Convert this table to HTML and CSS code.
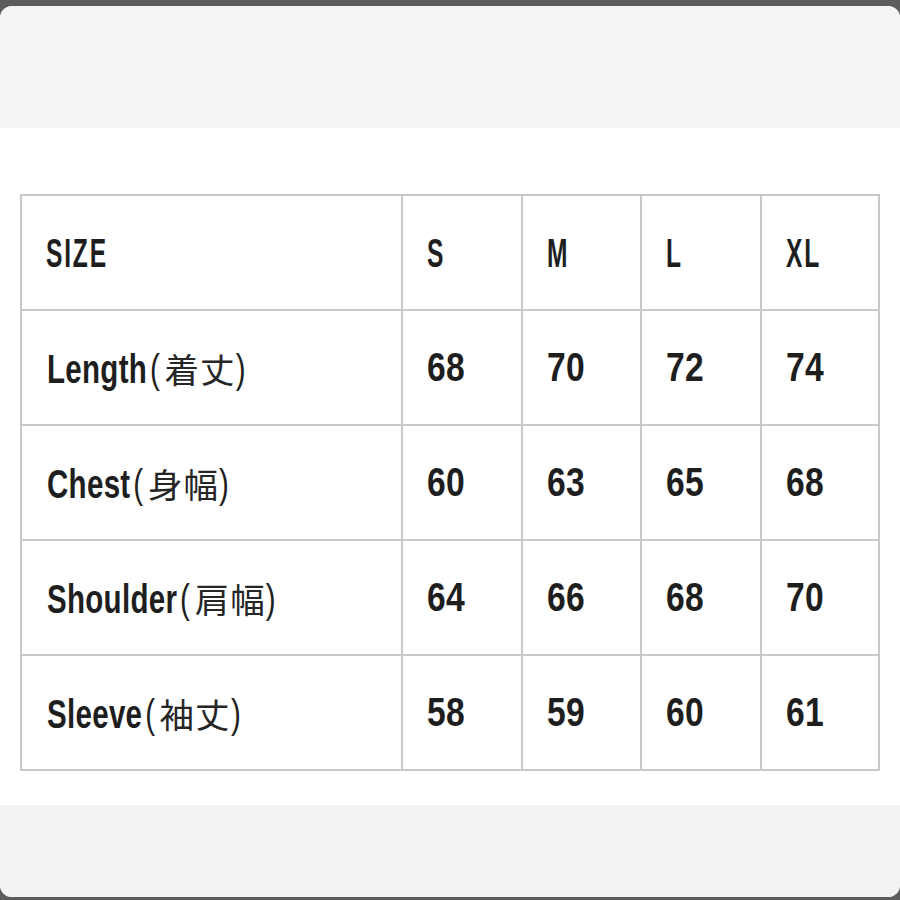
FILE: index.html
```html
<!DOCTYPE html>
<html lang="ja">
<head>
<meta charset="utf-8">
<title>Size chart</title>
<link rel="stylesheet" href="styles.css">
</head>
<body>
<div class="frame">
  <div class="band-top"></div>
  <div class="sheet">
    <div class="chart">
      <div class="cell"><span class="t caps">SIZE</span></div>
      <div class="cell"><span class="t caps">S</span></div>
      <div class="cell"><span class="t caps">M</span></div>
      <div class="cell"><span class="t caps">L</span></div>
      <div class="cell"><span class="t caps">XL</span></div>

      <div class="cell"><span class="t label">Length<span class="p">(</span><span class="cjk">着丈</span><span class="p">)</span></span></div>
      <div class="cell"><span class="t num">68</span></div>
      <div class="cell"><span class="t num">70</span></div>
      <div class="cell"><span class="t num">72</span></div>
      <div class="cell"><span class="t num">74</span></div>

      <div class="cell"><span class="t label">Chest<span class="p">(</span><span class="cjk">身幅</span><span class="p">)</span></span></div>
      <div class="cell"><span class="t num">60</span></div>
      <div class="cell"><span class="t num">63</span></div>
      <div class="cell"><span class="t num">65</span></div>
      <div class="cell"><span class="t num">68</span></div>

      <div class="cell"><span class="t label">Shoulder<span class="p">(</span><span class="cjk">肩幅</span><span class="p">)</span></span></div>
      <div class="cell"><span class="t num">64</span></div>
      <div class="cell"><span class="t num">66</span></div>
      <div class="cell"><span class="t num">68</span></div>
      <div class="cell"><span class="t num">70</span></div>

      <div class="cell"><span class="t label">Sleeve<span class="p">(</span><span class="cjk">袖丈</span><span class="p">)</span></span></div>
      <div class="cell"><span class="t num">58</span></div>
      <div class="cell"><span class="t num">59</span></div>
      <div class="cell"><span class="t num">60</span></div>
      <div class="cell"><span class="t num">61</span></div>
    </div>
  </div>
  <div class="band-bottom"></div>
</div>
</body>
</html>
```
FILE: styles.css
```css
html, body {
  margin: 0;
  padding: 0;
  background: #5c5c5c;
}
body {
  width: 900px;
  height: 900px;
  overflow: hidden;
  padding-top: 6px;
  box-sizing: border-box;
}
.frame {
  height: 891px;
  border-radius: 12px;
  background: #f4f4f4;
  overflow: hidden;
  display: flex;
  flex-direction: column;
}
.band-top {
  height: 122px;
  background: #f4f4f4;
}
.sheet {
  height: 677px;
  background: #ffffff;
  padding: 66px 20px 0 20px;
  box-sizing: border-box;
}
.band-bottom {
  flex: 1;
  background: #f3f3f3;
}
.chart {
  display: grid;
  grid-template-columns: 379px 118px 117px 118px 116px;
  grid-auto-rows: 113px;
  gap: 2px;
  padding: 2px;
  background: #c9c9c9;
  width: 860px;
  box-sizing: border-box;
}
.cell {
  background: #ffffff;
  display: flex;
  align-items: center;
  padding-left: 24px;
  overflow: hidden;
  font-family: "Liberation Sans", Arial, sans-serif;
  font-weight: 700;
  font-size: 41px;
  color: #1e1e1e;
  white-space: nowrap;
}
.t {
  display: inline-block;
  transform-origin: left center;
}
.caps {
  transform: scaleX(0.6);
  letter-spacing: 3px;
  margin-top: 2px;
}
.num {
  transform: scaleX(0.82);
  letter-spacing: 0.5px;
}
.label {
  transform: scaleX(0.72);
  letter-spacing: 0.4px;
  margin-left: 1px;
}
.p {
  font-weight: 400;
  margin: 0 3px 0 4px;
}
.cjk {
  display: inline-block;
  font-family: "Noto Sans CJK JP", sans-serif;
  font-weight: 400;
  font-size: 34.5px;
  letter-spacing: 1px;
  transform: scaleX(1.389);
  margin: 0 10px 0 17px;
  color: #262626;
}
```
